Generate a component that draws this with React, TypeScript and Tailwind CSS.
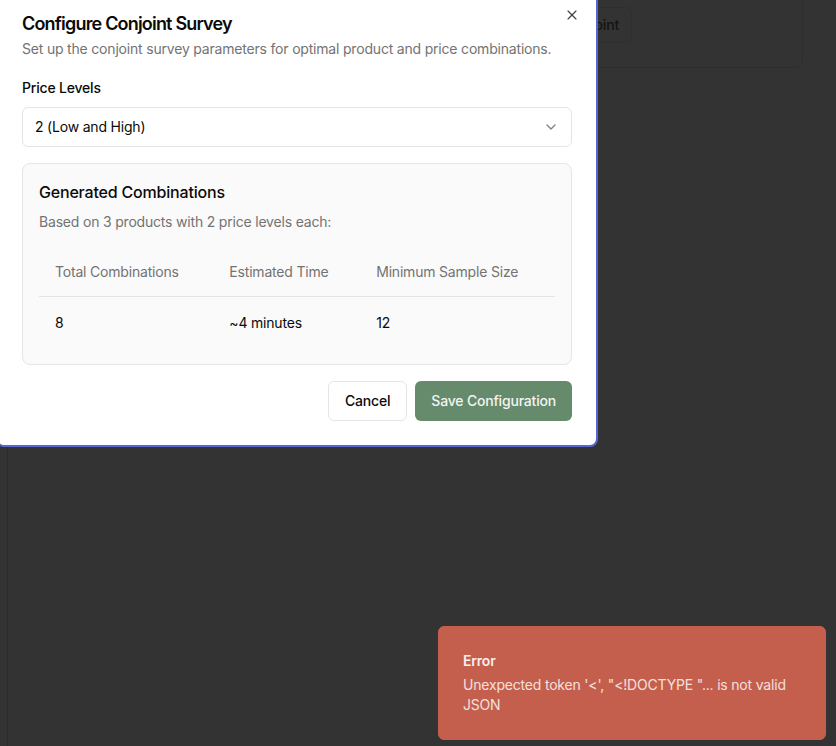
import { ChevronDown, X } from "lucide-react";

const stats = [
  { label: "Total Combinations", value: "8" },
  { label: "Estimated Time", value: "~4 minutes" },
  { label: "Minimum Sample Size", value: "12" },
];

const App = () => {
  return (
    <div
      className="relative h-[746px] w-full overflow-hidden bg-[#333333] tracking-[-0.012em]"
      style={{ fontFamily: "Inter, 'Noto Sans', sans-serif" }}
    >
      {/* page behind the overlay */}
      <div className="h-full pl-[7px]">
        <div className="flex h-full flex-col border-l border-[#2b2b2b]">
          <div className="mr-[33px] ml-6 mt-[-20px] flex h-[88px] items-end justify-end rounded-lg border border-[#2e2e2e] pb-6 pr-[170px]">
            <button className="h-9 rounded-md border border-[#2f2f2f] pl-4 pr-3 text-sm font-medium text-[#141414]">
              Configure Conjoint
            </button>
          </div>
        </div>
      </div>

      {/* dialog */}
      <div className="absolute left-[-4px] top-[-11px] w-[602px] rounded-lg border-2 border-[#5468d4] bg-white p-6">
        <button className="absolute right-4 top-4 text-[#404040]">
          <X className="h-4 w-4" strokeWidth={1.75} />
        </button>
        <h2 className="text-lg font-semibold leading-none tracking-[-0.045em] text-[#0a0a0a]">
          Configure Conjoint Survey
        </h2>
        <p className="mt-1.5 text-sm text-[#737373]">
          Set up the conjoint survey parameters for optimal product and price combinations.
        </p>

        <label className="mt-[22px] block text-sm font-medium leading-none text-[#0a0a0a]">
          Price Levels
        </label>
        <div className="mt-3 flex h-10 items-center justify-between rounded-md border border-[#e5e5e5] bg-white px-3 text-sm text-[#0a0a0a]">
          <span>2 (Low and High)</span>
          <ChevronDown className="h-4 w-4 opacity-50" />
        </div>

        <div className="mt-4 rounded-lg border border-[#e5e5e5] bg-[#fafafa] p-4">
          <h3 className="text-base font-medium text-[#0a0a0a]">Generated Combinations</h3>
          <p className="mt-2 text-sm text-[#737373]">
            Based on 3 products with 2 price levels each:
          </p>
          <table className="mt-4 w-full text-sm">
            <thead>
              <tr className="border-b border-[#e5e5e5]">
                {stats.map((s) => (
                  <th key={s.label} className="h-12 px-4 text-left align-middle font-normal text-[#737373]">
                    {s.label}
                  </th>
                ))}
              </tr>
            </thead>
            <tbody>
              <tr>
                {stats.map((s) => (
                  <td key={s.label} className="px-4 pt-4 pb-[15px] text-[#0a0a0a]">
                    {s.value}
                  </td>
                ))}
              </tr>
            </tbody>
          </table>
        </div>

        <div className="mt-4 flex justify-end gap-2">
          <button className="h-10 rounded-md border border-[#e5e5e5] bg-white px-4 text-sm font-medium text-[#0a0a0a]">
            Cancel
          </button>
          <button className="h-10 rounded-md bg-[#668a6c] px-4 text-sm font-medium text-[#f2f5f2]">
            Save Configuration
          </button>
        </div>
      </div>

      {/* toast */}
      <div className="absolute bottom-[6px] right-[10px] grid w-[388px] gap-1 rounded-md border border-[#c45f4c] bg-[#c55f4d] p-6">
        <div className="text-sm font-semibold text-[#f7efec]">Error</div>
        <div className="text-sm text-[#f7efec] opacity-90">
          Unexpected token '&lt;', "&lt;!DOCTYPE "... is not valid JSON
        </div>
      </div>
    </div>
  );
};

export default App;
